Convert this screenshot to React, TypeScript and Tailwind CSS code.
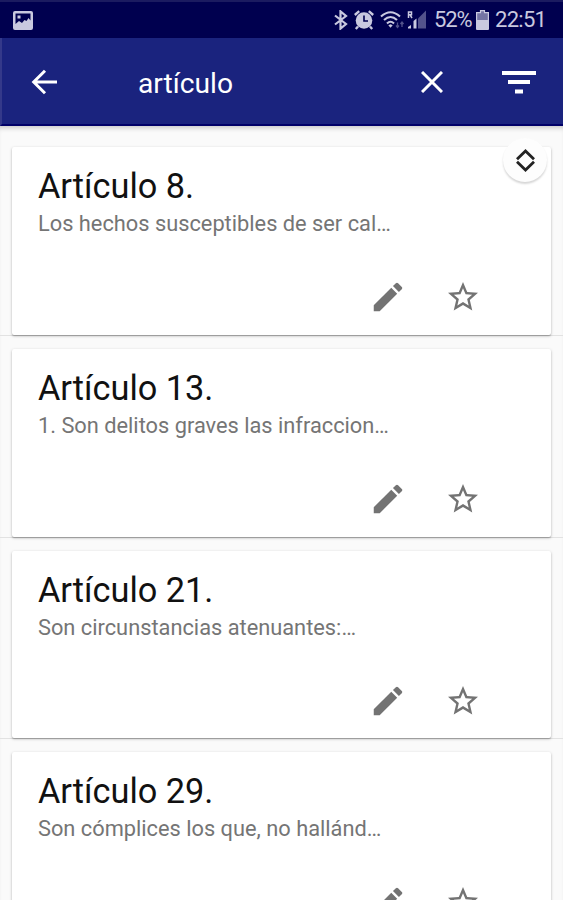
/**
 * Article search results screen
 */
interface Article {
  id: number;
  title: string;
  excerpt: string;
}

const articles: Article[] = [
  { id: 8, title: 'Artículo 8.', excerpt: 'Los hechos susceptibles de ser cal…' },
  { id: 13, title: 'Artículo 13.', excerpt: '1. Son delitos graves las infraccion…' },
  { id: 21, title: 'Artículo 21.', excerpt: 'Son circunstancias atenuantes:…' },
  { id: 29, title: 'Artículo 29.', excerpt: 'Son cómplices los que, no hallánd…' },
];

function StatusBar() {
  return (
    <div className="flex h-[38px] items-center border-t-2 border-[#1b1b60] bg-[#00004f] pr-[16px] pl-[13px] text-[#c9c9df]">
      <svg className="h-[19px] w-[20px]" viewBox="0 0 20 19">
        <path
          fill="currentColor"
          fillRule="evenodd"
          d="M2 0h16a2 2 0 0 1 2 2v15a2 2 0 0 1-2 2H2a2 2 0 0 1-2-2V2a2 2 0 0 1 2-2Zm0.500 2.500v10.500l3.500-3 3 2 2.500-3 2 1 2-3 2 2.500V2.500H2.500Zm2 2h3v3h-3v-3Z"
        />
      </svg>
      <svg className="ml-auto h-[20px] w-[14px]" viewBox="0 0 14 20" fill="none" stroke="currentColor" strokeWidth="2.200">
        <path d="M1 5.500 12 14l-5.500 4.600V1.400L12 6 1 14.500" />
      </svg>
      <svg className="ml-[6px] h-[20px] w-[20px]" viewBox="0 0 20 20">
        <circle cx="10" cy="10.500" r="8.300" fill="currentColor" />
        <path d="M.8 5 5.200 1.200M19.200 5l-4.400-3.800M4 16.500l-2.200 2.500M16 16.500l2.200 2.500" stroke="currentColor" strokeWidth="2.400" />
        <path d="M10 5.500v5.500h4" fill="none" stroke="#00004f" strokeWidth="1.600" />
      </svg>
      <svg className="ml-[6px] h-[20px] w-[25px]" viewBox="0 0 25 20" fill="none" stroke="currentColor" strokeWidth="2.100">
        <path d="M1 6.500q9.500-8.500 19 0M4 10q6.500-6 13 0M7 13.500q3.500-3.500 7 0" />
        <path d="m8.300 15.200 2.200 2.600 2.200-2.600-2.200-1Z" fill="currentColor" stroke="none" />
        <path d="M17.500 12.500v5m-1.500-2 1.500 2 1.500-2M22 17v-5m-1.500 2 1.500-2 1.500 2" stroke="#53538c" strokeWidth="1.300" />
      </svg>
      <svg className="ml-[2px] h-[20px] w-[20px]" viewBox="0 0 20 20">
        <path d="M1.500 8V2h3v2.800h-3M3 4.800l2 3.200" fill="none" stroke="currentColor" strokeWidth="1.500" />
        <path d="M1 18.500v-1.500l3-2v3.500ZM6.500 18.500V11l3-2.500v10Z" fill="currentColor" />
        <path d="M11 18.500V8.500l8-8v18Z" fill="#53538c" />
      </svg>
      <span className="ml-[7px] w-[39px] text-[22px] leading-none whitespace-nowrap tracking-[-1.100px]">52%</span>
      <svg className="ml-[3px] h-[20px] w-[13px]" viewBox="0 0 13 20">
        <path d="M1 2h3V0h5v2h3a1 1 0 0 1 1 1v7H0V3a1 1 0 0 1 1-1Z" fill="#7474a3" />
        <path d="M0 10h13v9a1 1 0 0 1-1 1H1a1 1 0 0 1-1-1Z" fill="currentColor" />
        <path d="M.6 11V2.600h3.900V.6h4v2h3.900V11" fill="none" stroke="currentColor" strokeWidth="1.200" />
      </svg>
      <span className="ml-[6px] w-[52px] text-[22px] leading-none whitespace-nowrap tracking-[-0.700px]">22:51</span>
    </div>
  );
}

function SearchBar() {
  return (
    <header className="flex h-[88px] items-center border-b-2 border-l-2 border-b-[#000068] border-l-[#34398a] bg-[#1a237e] pt-[2px] pr-[27px] pl-[29px] text-white">
      <button aria-label="Volver">
        <svg className="h-[26px] w-[27px]" viewBox="0 0 27 26" fill="none" stroke="currentColor" strokeWidth="3">
          <path d="M26 13H3M14 1.700 2.700 13 14 24.300" />
        </svg>
      </button>
      <span className="ml-[80px] pt-[5px] text-[28.200px] leading-none">artículo</span>
      <button aria-label="Borrar" className="ml-auto">
        <svg className="h-[22px] w-[22px]" viewBox="0 0 22 22" stroke="currentColor" strokeWidth="3">
          <path d="m1 1 20 20M21 1 1 21" />
        </svg>
      </button>
      <button aria-label="Filtrar" className="ml-[59px]">
        <svg className="h-[23px] w-[34px]" viewBox="0 0 34 23" fill="currentColor">
          <path d="M0 0h34v4H0zM6 9h22v4H6zM13 18.500h8v4h-8z" />
        </svg>
      </button>
    </header>
  );
}

function ArticleCard({ article }: { article: Article }) {
  return (
    <li className="h-[201.650px] border-b border-[#e2e2e2] px-[12px] pt-[13px]">
      <article className="flex h-full flex-col rounded-[2px] bg-white pr-[70px] pl-[26px] shadow-[0_1px_3px_rgba(0,0,0,0.25),0_1px_1px_rgba(0,0,0,0.18)]">
        <h2 className="mt-[19px] text-[34.300px] leading-[41px] text-[#111]">{article.title}</h2>
        <p className="mt-px text-[21.800px] leading-[32px] whitespace-nowrap text-[#757575]">{article.excerpt}</p>
        <div className="mt-[38px] flex items-center justify-end gap-[38px] text-[#737373]">
          <button aria-label="Editar">
            <svg className="h-[38px] w-[38px]" viewBox="0 0 24 24" fill="currentColor">
              <path d="M3 17.250V21h3.750L17.810 9.940l-3.750-3.750L3 17.250zM20.710 7.040a1 1 0 0 0 0-1.410l-2.340-2.340a1 1 0 0 0-1.410 0l-1.830 1.830 3.750 3.750 1.830-1.830z" />
            </svg>
          </button>
          <button aria-label="Favorito">
            <svg className="h-[36px] w-[36px]" viewBox="0 0 24 24" fill="currentColor">
              <path d="M22 9.240l-7.190-.62L12 2 9.190 8.630 2 9.240l5.460 4.730L5.820 21 12 17.270 18.180 21l-1.630-7.030L22 9.240zM12 15.400l-3.760 2.270 1-4.280-3.320-2.880 4.380-.38L12 6.100l1.710 4.040 4.380.38-3.320 2.880 1 4.280L12 15.400z" />
            </svg>
          </button>
        </div>
      </article>
    </li>
  );
}

export default function App() {
  return (
    <div className="flex h-[900px] w-[563px] flex-col overflow-hidden bg-[#fafafa] font-['Roboto',sans-serif]">
      <StatusBar />
      <SearchBar />
      <main className="relative min-h-0 flex-1 overflow-hidden pt-[8.300px] shadow-[inset_0_5px_5px_-3px_rgba(0,0,0,0.2)]">
        <ul>
          {articles.map((article) => (
            <ArticleCard key={article.id} article={article} />
          ))}
        </ul>
        <button
          aria-label="Ordenar"
          className="absolute top-[12px] right-[16px] flex h-[44px] w-[44px] items-center justify-center rounded-full bg-[#fdfdfd] shadow-[0_2px_2px_rgba(0,0,0,0.16)]"
        >
          <svg className="h-[23px] w-[19px]" viewBox="0 0 19 23" fill="none" stroke="#222" strokeWidth="2.800">
            <path d="M1 10.200 9.500 2 18 10.200M1 12.800 9.500 21l8.500-8.200" />
          </svg>
        </button>
      </main>
    </div>
  );
}
